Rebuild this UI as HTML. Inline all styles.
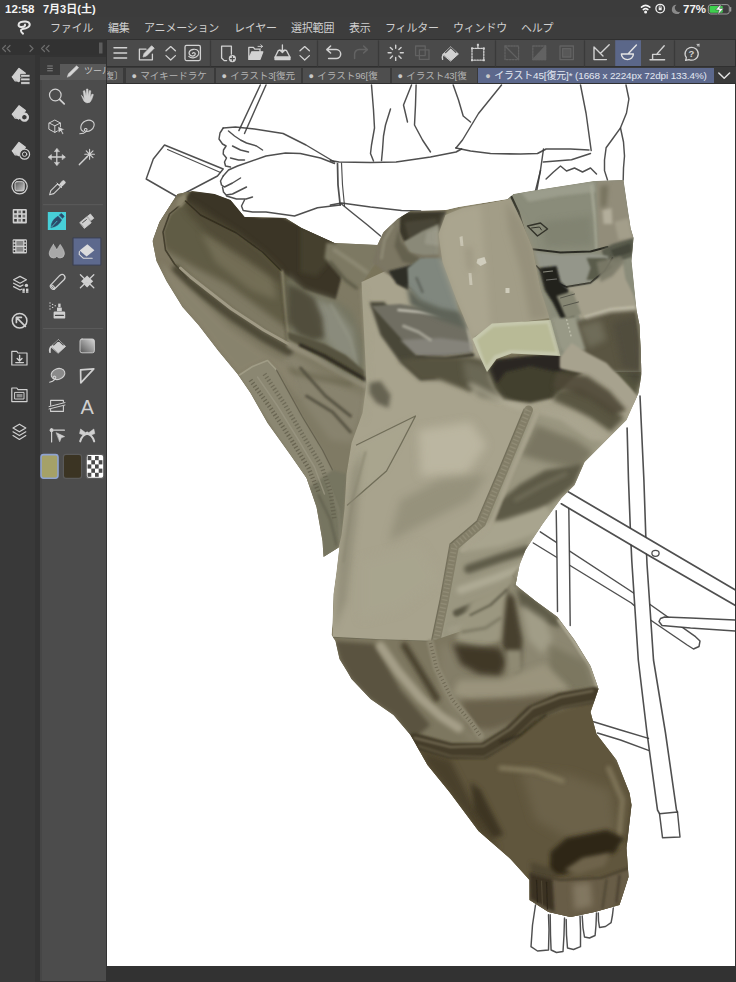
<!DOCTYPE html>
<html lang="ja"><head><meta charset="utf-8"><title>CLIP STUDIO PAINT</title>
<style>
html,body{margin:0;padding:0;}
body{width:736px;height:982px;position:relative;overflow:hidden;background:#333;font-family:"Liberation Sans","Noto Sans CJK JP",sans-serif;color:#d8d8d8;}
.abs{position:absolute;}
#status{left:0;top:0;width:736px;height:17px;background:#3c3c3c;}
#status span{position:absolute;top:2px;font-size:11.5px;line-height:14px;color:#f4f4f4;font-weight:bold;white-space:nowrap;}
#menu{left:0;top:17px;width:736px;height:22px;background:#3d3d3d;}
#menu span{position:absolute;top:4px;font-size:11px;line-height:14px;color:#d0d0d0;white-space:nowrap;letter-spacing:-0.2px;}
#leftstrip{left:0;top:39px;width:35px;height:943px;background:#393939;}
#leftgap{left:35px;top:39px;width:5px;height:943px;background:#343434;}
#lefttop{left:0;top:39px;width:106px;height:16px;background:#323232;}
#toolpanel{left:40px;top:57px;width:65.5px;height:924px;background:#4c4c4c;border-left:2px solid #464646;box-sizing:border-box;}
#tphead{left:40px;top:57px;width:65.5px;height:23px;background:#3a3a3a;}
#tpline{left:40px;top:75px;width:65.5px;height:5px;background:#565656;}
#tptab{left:60px;top:63.5px;width:45.500px;height:16px;background:#595959;overflow:hidden;}
#tptab span{position:absolute;left:24px;top:1px;font-size:9px;line-height:12px;color:#c8c8c8;white-space:nowrap;}
#tbdark{left:105.500px;top:39px;width:631px;height:46px;background:#303030;}
#toolbar{left:106.500px;top:40.200px;width:628.500px;height:26px;background:#4a4a4a;}
#tabs{left:106.500px;top:67.300px;width:629px;height:16.200px;background:#3a3a3a;}
#canvas{left:106.500px;top:84px;width:628.700px;height:881.600px;background:#fff;overflow:hidden;}
#bottom{left:105.500px;top:965.600px;width:631px;height:17px;background:#323232;}
.tab{position:absolute;top:67.800px;height:15.400px;font-size:9.6px;line-height:15.400px;color:#b4b4b4;white-space:nowrap;overflow:hidden;background:#4e4e4e;letter-spacing:-0.1px;}
.tab.sel{background:#5c688c;color:#e4e8f2;font-size:9.9px;}
.tab b{font-weight:normal;font-size:9px;vertical-align:0px;margin-right:3.5px;color:#c8c8c8;}
</style></head><body>
<div id="status" class="abs"><span style="left:5px">12:58</span><span style="left:43px;font-size:11px">7月3日(土)</span><span style="left:683px">77%</span></div>
<div id="menu" class="abs">
<span style="left:50px">ファイル</span><span style="left:108px">編集</span><span style="left:144px">アニメーション</span><span style="left:234px">レイヤー</span><span style="left:291px">選択範囲</span><span style="left:349px">表示</span><span style="left:385px">フィルター</span><span style="left:453px">ウィンドウ</span><span style="left:521px">ヘルプ</span>
</div>
<div id="leftstrip" class="abs"></div><div id="leftgap" class="abs"></div>
<div id="lefttop" class="abs"></div>
<div id="toolpanel" class="abs"></div><div id="tphead" class="abs"></div><div id="tpline" class="abs"></div>
<div id="tptab" class="abs"><span>ツール</span></div>
<div id="tbdark" class="abs"></div>
<div id="toolbar" class="abs"></div>
<div id="tabs" class="abs"></div>
<div class="tab" style="left:106.500px;width:16px;"><span style="margin-left:-2px">復〕</span></div>
<div class="tab" style="left:125.500px;width:88px;padding-left:6px;box-sizing:border-box"><b>●</b>マイキードラケ</div>
<div class="tab" style="left:215.500px;width:85px;padding-left:6px;box-sizing:border-box"><b>●</b>イラスト3[復元</div>
<div class="tab" style="left:302.500px;width:87px;padding-left:6px;box-sizing:border-box"><b>●</b>イラスト96[復</div>
<div class="tab" style="left:391.500px;width:85px;padding-left:6px;box-sizing:border-box"><b>●</b>イラスト43[復</div>
<div class="tab sel" style="left:478.300px;width:235.500px;padding-left:7px;box-sizing:border-box"><b>●</b>イラスト45[復元]* (1668 x 2224px 72dpi 133.4%)</div>
<div id="canvas" class="abs"><svg width="630" height="882" viewBox="106.500 84 630 882" style="position:absolute;left:0;top:0">
<defs>
<filter id="b3" filterUnits="userSpaceOnUse" x="100" y="80" width="640" height="890"><feGaussianBlur stdDeviation="3"/></filter>
<filter id="b1" filterUnits="userSpaceOnUse" x="100" y="80" width="640" height="890"><feGaussianBlur stdDeviation="1"/></filter>
<filter id="b2" filterUnits="userSpaceOnUse" x="100" y="80" width="640" height="890"><feGaussianBlur stdDeviation="2"/></filter>
<filter id="b1_5" filterUnits="userSpaceOnUse" x="100" y="80" width="640" height="890"><feGaussianBlur stdDeviation="1.5"/></filter>
<filter id="b2_5" filterUnits="userSpaceOnUse" x="100" y="80" width="640" height="890"><feGaussianBlur stdDeviation="2.5"/></filter>
<filter id="b1_2" filterUnits="userSpaceOnUse" x="100" y="80" width="640" height="890"><feGaussianBlur stdDeviation="1.2"/></filter>
<filter id="b0_6" filterUnits="userSpaceOnUse" x="100" y="80" width="640" height="890"><feGaussianBlur stdDeviation="0.6"/></filter>
<filter id="b0_7" filterUnits="userSpaceOnUse" x="100" y="80" width="640" height="890"><feGaussianBlur stdDeviation="0.7"/></filter>
<filter id="b0_8" filterUnits="userSpaceOnUse" x="100" y="80" width="640" height="890"><feGaussianBlur stdDeviation="0.8"/></filter>
<filter id="b4" filterUnits="userSpaceOnUse" x="100" y="80" width="640" height="890"><feGaussianBlur stdDeviation="4"/></filter>
<filter id="b1_8" filterUnits="userSpaceOnUse" x="100" y="80" width="640" height="890"><feGaussianBlur stdDeviation="1.8"/></filter>
<filter id="b0_5" filterUnits="userSpaceOnUse" x="100" y="80" width="640" height="890"><feGaussianBlur stdDeviation="0.5"/></filter>
<filter id="b5" filterUnits="userSpaceOnUse" x="100" y="80" width="640" height="890"><feGaussianBlur stdDeviation="5"/></filter>

<clipPath id="sil"><path d="M177,194 L192,191 L214,194 L230,200 L244,217 L285,218 L301,228 L334,243 L377,245 L383,232 L397,219 L410,211 L445,210 L458,207 L507,199 L513,194 L543,189 L575,184 L594,181 L623,180 L630,228 L633,238 L631,261 L636,310 L639,325 L641,374 L638,393 L626,420 L604,442 L584,462 L574,485 L561,498 L542,524 L525,550 L519,565 L515,585 L535,601 L557,617 L574,640 L590,666 L598,689 L590,712 L596,734 L616,760 L629,793 L631,805 L626,848 L628,877 L619,905 L594,912 L570,917 L548,912 L529,900 L529,880 L510,859 L478,831 L449,792 L427,765 L410,735 L393,715 L370,699 L351,679 L347,672 L339,659 L335,641 L331,635 L332,623 L333,594 L336,572 L339,547 L323,557 L322,541 L316,507 L306,478 L290,455 L267,423 L250,393 L237,374 L218,351 L198,325 L182,307 L166,281 L156,261 L152,241 L159,222 Z"/></clipPath>
</defs>
<g>
<path d="M259.8,85 L238.4,130.6" fill="none" stroke="#3c3c3c" stroke-width="1.45" stroke-linecap="round" stroke-linejoin="round" opacity="0.9"/>
<path d="M265.5,85 L244,133.5" fill="none" stroke="#3c3c3c" stroke-width="1.45" stroke-linecap="round" stroke-linejoin="round" opacity="0.9"/>
<path d="M164,145 L222.7,169 L217,176 L177,197 L145.7,179 L152.8,159 L164,145" fill="none" stroke="#3c3c3c" stroke-width="1.45" stroke-linecap="round" stroke-linejoin="round" opacity="0.9"/>
<path d="M167,149.5 L220,172.5" fill="none" stroke="#3c3c3c" stroke-width="1.16" stroke-linecap="round" stroke-linejoin="round" opacity="0.9"/>
<path d="M222.7,128 L219.5,133 L218.5,139 L222,144 L225.6,146 L223,150 L222.7,154 L226,158 L224,162 L225,166 L230,167" fill="none" stroke="#3c3c3c" stroke-width="1.45" stroke-linecap="round" stroke-linejoin="round" opacity="0.9"/>
<path d="M222.7,128 L235,127 L254,129 L282.6,133.5 L305.5,145 L334,162" fill="none" stroke="#3c3c3c" stroke-width="1.45" stroke-linecap="round" stroke-linejoin="round" opacity="0.9"/>
<path d="M228,131 L234,136 L240,140 L246,143 L256,146 L262,150" fill="none" stroke="#3c3c3c" stroke-width="1.45" stroke-linecap="round" stroke-linejoin="round" opacity="0.9"/>
<path d="M232,146 L240,150 L248,152" fill="none" stroke="#3c3c3c" stroke-width="1.45" stroke-linecap="round" stroke-linejoin="round" opacity="0.9"/>
<path d="M230,158 L238,160 L244,160" fill="none" stroke="#3c3c3c" stroke-width="1.45" stroke-linecap="round" stroke-linejoin="round" opacity="0.9"/>
<path d="M222.7,176 L228,170 L237,166 L265.5,156 L285,153 L299.8,153.5 L320,158 L334,163.5" fill="none" stroke="#3c3c3c" stroke-width="1.45" stroke-linecap="round" stroke-linejoin="round" opacity="0.9"/>
<path d="M222.7,176 L220,181 L221,185 L224,187 L232,183 L240,178" fill="none" stroke="#3c3c3c" stroke-width="1.45" stroke-linecap="round" stroke-linejoin="round" opacity="0.9"/>
<path d="M222,187 L223,192 L225.6,195 L232,194 L240,190 L246,187" fill="none" stroke="#3c3c3c" stroke-width="1.45" stroke-linecap="round" stroke-linejoin="round" opacity="0.9"/>
<path d="M226,196 L236,199 L245.6,199 L252,197" fill="none" stroke="#3c3c3c" stroke-width="1.45" stroke-linecap="round" stroke-linejoin="round" opacity="0.9"/>
<path d="M244,200 L241,206 L242.7,210.5 L252,212 L265.5,212 L294,216 L317,207.7 L339.7,205" fill="none" stroke="#3c3c3c" stroke-width="1.45" stroke-linecap="round" stroke-linejoin="round" opacity="0.9"/>
<path d="M337,163.5 L337.5,185 L339.7,205" fill="none" stroke="#3c3c3c" stroke-width="1.74" stroke-linecap="round" stroke-linejoin="round" opacity="0.9"/>
<path d="M341,163 L342,185 L344,206" fill="none" stroke="#3c3c3c" stroke-width="1.16" stroke-linecap="round" stroke-linejoin="round" opacity="0.9"/>
<path d="M330,160.6 L338.6,162 L370,162.5 L395.6,162 L430,157 L455.5,152 L461,149" fill="none" stroke="#3c3c3c" stroke-width="1.74" stroke-linecap="round" stroke-linejoin="round" opacity="0.9"/>
<path d="M330,205 L341,203 L370,207 L401,210.5 L420,211" fill="none" stroke="#3c3c3c" stroke-width="1.74" stroke-linecap="round" stroke-linejoin="round" opacity="0.9"/>
<path d="M341,204 L352,213 L367,225 L380,236" fill="none" stroke="#3c3c3c" stroke-width="1.45" stroke-linecap="round" stroke-linejoin="round" opacity="0.9"/>
<path d="M371,85 L373,110 L374,128 L371,145 L370,153.5 L373,161" fill="none" stroke="#3c3c3c" stroke-width="1.45" stroke-linecap="round" stroke-linejoin="round" opacity="0.9"/>
<path d="M390,109 L385,125 L383,136 L382,150 L381,160.6" fill="none" stroke="#3c3c3c" stroke-width="1.45" stroke-linecap="round" stroke-linejoin="round" opacity="0.9"/>
<path d="M415.6,85 L415,105 L414,125 L422,140 L430,152" fill="none" stroke="#3c3c3c" stroke-width="1.45" stroke-linecap="round" stroke-linejoin="round" opacity="0.9"/>
<path d="M411,85 L403,105 L407,122" fill="none" stroke="#3c3c3c" stroke-width="1.45" stroke-linecap="round" stroke-linejoin="round" opacity="0.9"/>
<path d="M501,85 L478,113.5 L462,140 L455.5,148" fill="none" stroke="#3c3c3c" stroke-width="1.45" stroke-linecap="round" stroke-linejoin="round" opacity="0.9"/>
<path d="M452.7,85 L458,100 L462.7,116 L470,122" fill="none" stroke="#3c3c3c" stroke-width="1.45" stroke-linecap="round" stroke-linejoin="round" opacity="0.9"/>
<path d="M455.5,148 L470,151 L490,153.5 L520,154 L537,153.5 L545.6,149 L570,149 L588.4,150" fill="none" stroke="#3c3c3c" stroke-width="1.74" stroke-linecap="round" stroke-linejoin="round" opacity="0.9"/>
<path d="M540,170.6 L535,190.6" fill="none" stroke="#3c3c3c" stroke-width="1.45" stroke-linecap="round" stroke-linejoin="round" opacity="0.9"/>
<path d="M542.8,162 L571,159.7 L590,153.5" fill="none" stroke="#3c3c3c" stroke-width="1.45" stroke-linecap="round" stroke-linejoin="round" opacity="0.9"/>
<path d="M543,149 L540,170 L536,192" fill="none" stroke="#3c3c3c" stroke-width="1.45" stroke-linecap="round" stroke-linejoin="round" opacity="0.9"/>
<path d="M580,85 L585.6,113.5 L590.7,150.6" fill="none" stroke="#3c3c3c" stroke-width="1.45" stroke-linecap="round" stroke-linejoin="round" opacity="0.9"/>
<path d="M625.5,85 L628.4,99 L626,113 L620,127.8 L612,139 L605.6,147.8 L604,160 L604,170.6 L607,180" fill="none" stroke="#3c3c3c" stroke-width="1.45" stroke-linecap="round" stroke-linejoin="round" opacity="0.9"/>
<path d="M620,128 L623,142 L624,156 L623,168 L622.7,180" fill="none" stroke="#3c3c3c" stroke-width="1.45" stroke-linecap="round" stroke-linejoin="round" opacity="0.9"/>
<path d="M545.6,179 L553,172 L560,166 L566,171 L574,168 L582,172 L590,168 L596,174" fill="none" stroke="#3c3c3c" stroke-width="1.45" stroke-linecap="round" stroke-linejoin="round" opacity="0.9"/>
<path d="M539.8,531.8 L629.4,590.5 L695,636.7 L700,640 L699,646 L693,649 L686.7,645 L630.8,603 L532.8,543 Z" fill="#fff" stroke="none"/>
<path d="M539.8,531.8 L629.4,590.5 L647.5,603 L695,636.7 L699.5,641 L698.5,646.5 L693,649 L686.7,645 L650,620 L630.8,603 L532.8,543" fill="none" stroke="#3c3c3c" stroke-width="1.45" stroke-linecap="round" stroke-linejoin="round" opacity="0.9"/>
<path d="M664,617 L736,620 L736,631 L661.5,625.5 L658,622 L660,618 Z" fill="#fff" stroke="none"/>
<path d="M736,620 L690,618 L664,617 L660,618.5 L658.5,621.5 L661.5,625.5 L690,628 L736,631" fill="none" stroke="#3c3c3c" stroke-width="1.45" stroke-linecap="round" stroke-linejoin="round" opacity="0.9"/>
<path d="M628,480 L643.4,480 L645.3,536 L646.5,564 L653,660 L665,733 L676,810 L677,812 L659,813.7 L657,810 L646.5,733 L637.8,660 L631.3,561 L630,533 Z" fill="#fff" stroke="none"/>
<path d="M626.6,428 L628,480 L630,533 L631.3,561 L637.8,660 L646.5,733 L657,810 L659,813.7" fill="none" stroke="#3c3c3c" stroke-width="1.595" stroke-linecap="round" stroke-linejoin="round" opacity="0.9"/>
<path d="M639.5,396 L643.4,480 L645.3,536 L646.5,564 L653,660 L665,733 L676,810 L677,812" fill="none" stroke="#3c3c3c" stroke-width="1.595" stroke-linecap="round" stroke-linejoin="round" opacity="0.9"/>
<path d="M555.7,510.8 L568.3,508 L569.7,625.5 L557,611.5 Z" fill="#fff" stroke="none"/>
<path d="M555.7,510.8 L556.5,560 L557,611.5" fill="none" stroke="#3c3c3c" stroke-width="1.45" stroke-linecap="round" stroke-linejoin="round" opacity="0.9"/>
<path d="M568.3,508 L569,560 L569.7,625.5" fill="none" stroke="#3c3c3c" stroke-width="1.45" stroke-linecap="round" stroke-linejoin="round" opacity="0.9"/>
<path d="M566.4,491 L736,590.6 L736,606 L560.8,503.8 Z" fill="#fff" stroke="none"/>
<path d="M566.4,491 L655,543 L736,590.6" fill="none" stroke="#3c3c3c" stroke-width="1.74" stroke-linecap="round" stroke-linejoin="round" opacity="0.9"/>
<path d="M560.8,503.8 L650,556.5 L736,606" fill="none" stroke="#3c3c3c" stroke-width="1.74" stroke-linecap="round" stroke-linejoin="round" opacity="0.9"/>
<ellipse cx="655" cy="553.300" rx="3.600" ry="3" fill="none" stroke="#3c3c3c" stroke-width="1.300" stroke-opacity="0.9"/>
<path d="M590.6,721 L620,730 L648,738.4" fill="none" stroke="#3c3c3c" stroke-width="1.45" stroke-linecap="round" stroke-linejoin="round" opacity="0.9"/>
<path d="M597,733 L620,740 L648,750.4" fill="none" stroke="#3c3c3c" stroke-width="1.45" stroke-linecap="round" stroke-linejoin="round" opacity="0.9"/>
<path d="M659,813.7 L662,837.7 L679.5,837 L677,812 L659,813.7" fill="none" stroke="#3c3c3c" stroke-width="1.45" stroke-linecap="round" stroke-linejoin="round" opacity="0.9"/>
<path d="M535,905 L532,925 L530.5,946.7 L537,951 L548,950 L548.5,930 L548,914.7" fill="none" stroke="#3c3c3c" stroke-width="1.45" stroke-linecap="round" stroke-linejoin="round" opacity="0.9"/>
<path d="M549.7,914.7 L550,935 L550.6,950 L556,952.5 L562.5,951.5 L563.5,935 L564,918" fill="none" stroke="#3c3c3c" stroke-width="1.45" stroke-linecap="round" stroke-linejoin="round" opacity="0.9"/>
<path d="M565.7,919.5 L566,935 L567,948 L573,949.5 L580,946.7 L580,930 L579.5,916" fill="none" stroke="#3c3c3c" stroke-width="1.45" stroke-linecap="round" stroke-linejoin="round" opacity="0.9"/>
<path d="M581.7,916 L582.5,928 L584,937 L589,938 L594.6,935.5 L595.5,925 L596,913" fill="none" stroke="#3c3c3c" stroke-width="1.45" stroke-linecap="round" stroke-linejoin="round" opacity="0.9"/>
<path d="M597.8,913 L598,921 L599,927.5 L605,926.5 L610.6,922.7 L612,915 L612.8,908" fill="none" stroke="#3c3c3c" stroke-width="1.45" stroke-linecap="round" stroke-linejoin="round" opacity="0.9"/>
</g>
<g clip-path="url(#sil)">
<path d="M177,194 L192,191 L214,194 L230,200 L244,217 L285,218 L301,228 L334,243 L377,245 L383,232 L397,219 L410,211 L445,210 L458,207 L507,199 L513,194 L543,189 L575,184 L594,181 L623,180 L630,228 L633,238 L631,261 L636,310 L639,325 L641,374 L638,393 L626,420 L604,442 L584,462 L574,485 L561,498 L542,524 L525,550 L519,565 L515,585 L535,601 L557,617 L574,640 L590,666 L598,689 L590,712 L596,734 L616,760 L629,793 L631,805 L626,848 L628,877 L619,905 L594,912 L570,917 L548,912 L529,900 L529,880 L510,859 L478,831 L449,792 L427,765 L410,735 L393,715 L370,699 L351,679 L347,672 L339,659 L335,641 L331,635 L332,623 L333,594 L336,572 L339,547 L323,557 L322,541 L316,507 L306,478 L290,455 L267,423 L250,393 L237,374 L218,351 L198,325 L182,307 L166,281 L156,261 L152,241 L159,222 Z" fill="#7a745a"/>
<path d="M150,185 L383,232 L384,250 L362,282 L366,383 L362,413 L351,443 L346,474 L344,509 L341,535 L338,548 L320,560 L140,330 Z" fill="#7f7a64"/>
<path d="M176,192 L246,215 L300,228 L300,300 L292,332 L262,310 L227,284 L194,267 L156,245 L156,225 Z" fill="#605b44" filter="url(#b3)"/>
<path d="M200,232 L240,250 L272,276 L276,300 L250,290 L215,262 Z" fill="#7c765d" filter="url(#b3)" opacity="0.7"/>
<path d="M185,200 L190,191 L214,192 L231,198 L240,207 L247,216 L262,218 L279,216 L300,226 L334,241 L345,262 L335,300 L303,290 L281,271 L262,252 L236,233 L222,226 L200,215 Z" fill="#3b3626" filter="url(#b1)"/>
<path d="M184,199 L198,207 L214,218 L236,232 L262,252 L281,271 L282,285 L258,268 L230,250 L205,232 L186,212 Z" fill="#4f4a35" filter="url(#b3)" opacity="0.85"/>
<path d="M300,226 L334,241 L328,262 L316,276 L300,272 Z" fill="#45412f" filter="url(#b2)"/>
<path d="M326,243 L377,245 L384,250 L372,266 L361,283 L350,288 L335,270 L324,258 Z" fill="#7d7963" filter="url(#b1_5)"/>
<path d="M334,250 L352,262 L366,272" fill="none" stroke="#918d77" stroke-width="4" stroke-linecap="round" stroke-linejoin="round" filter="url(#b1_5)" opacity="0.8"/>
<path d="M330,262 L345,280 L356,288" fill="none" stroke="#55523f" stroke-width="3" stroke-linecap="round" stroke-linejoin="round" filter="url(#b1_5)" opacity="0.8"/>
<path d="M177,196 L164,211 L156,226 L151.5,242 L155,258 L161,271 L170,286 L182,301 L192,286 L176,266 L166,250 L163.5,232 L170,215 L185,201 Z" fill="#7f7862" filter="url(#b1)"/>
<path d="M286,350 L318,372 L345,388 L364,396 L362,413 L351,443 L330,440 L300,400 L280,370 Z" fill="#88836e" filter="url(#b3)"/>
<path d="M286,370 L320,378 L350,384" fill="none" stroke="#6b6650" stroke-width="6" stroke-linecap="round" stroke-linejoin="round" filter="url(#b2_5)" opacity="0.7"/>
<path d="M300,368 L325,396 L350,416" fill="none" stroke="#4d4a3a" stroke-width="3" stroke-linecap="round" stroke-linejoin="round" filter="url(#b1_2)" opacity="0.8"/>
<path d="M306,396 L332,412 L350,432" fill="none" stroke="#4d4a3a" stroke-width="3" stroke-linecap="round" stroke-linejoin="round" filter="url(#b1_2)" opacity="0.8"/>
<path d="M184.5,201 L169,214 L162.5,232 L165,250 L174,264 L186,278" fill="none" stroke="#3f3a2a" stroke-width="1.6" stroke-linecap="round" stroke-linejoin="round" filter="url(#b0_6)" opacity="0.9"/>
<path d="M178,197 L185,193.5 L186,200 L181,207 L176,206 Z" fill="#8a846c" filter="url(#b1)"/>
<path d="M185,201 L200,215 L222,226 L236,233 L262,252 L281,271" fill="none" stroke="#2f2a1c" stroke-width="1.5" stroke-linecap="round" stroke-linejoin="round" filter="url(#b0_6)" opacity="0.8"/>
<path d="M176,270 L188,282 L204,295 L233,317 L263,337 L288,351" fill="none" stroke="#4c4735" stroke-width="9.5" stroke-linecap="round" stroke-linejoin="round" filter="url(#b2)" opacity="0.95"/>
<path d="M180,268 L190,277 L231,309 L263,330 L290,345" fill="none" stroke="#a09a85" stroke-width="3" stroke-linecap="round" stroke-linejoin="round" filter="url(#b0_7)"/>
<path d="M290,345 L311,355 L340,371 L365,385" fill="none" stroke="#938d78" stroke-width="7" stroke-linecap="round" stroke-linejoin="round" filter="url(#b1_5)"/>
<path d="M281.5,271 L284,300 L288,340" fill="none" stroke="#938d73" stroke-width="2.2" stroke-linecap="round" stroke-linejoin="round" filter="url(#b0_8)"/>
<path d="M279.5,273 L282,302 L286,340" fill="none" stroke="#4f4a37" stroke-width="1.2" stroke-linecap="round" stroke-linejoin="round" filter="url(#b0_8)" opacity="0.8"/>
<path d="M286,274 L303,290 L335,300 L352,312 L362,340 L366,383 L340,372 L310,350 L290,338 Z" fill="#767662" filter="url(#b3)"/>
<path d="M306,296 L334,306 L352,330 L358,365 L334,352 L316,328 Z" fill="#8a8b7b" filter="url(#b3)"/>
<path d="M287,284 L300,289 L314,298 L322,318 L324,338 L312,340 L298,334 L288,322 Z" fill="#4d4938" filter="url(#b2_5)" opacity="0.9"/>
<path d="M330,304 L350,340 L358,372" fill="none" stroke="#9a9b8c" stroke-width="2" stroke-linecap="round" stroke-linejoin="round" filter="url(#b1_5)" opacity="0.6"/>
<path d="M287,332 L304,337 L324,344 L345,355 L364,371 L366,382 L345,371 L324,359 L304,348 L288,339 Z" fill="#57533f" filter="url(#b1)"/>
<path d="M300,345 L324,356 L345,368 L364,379" fill="none" stroke="#2f2c20" stroke-width="3.5" stroke-linecap="round" stroke-linejoin="round" filter="url(#b0_8)"/>
<path d="M160,262 L190,290 L228,328 L262,352 L286,364 L300,400 L276,370 L267,360 L238,375 L218,351 L198,325 L182,307 L166,281 Z" fill="#8a846e" filter="url(#b2_5)" opacity="0.95"/>
<path d="M238.5,375 L252,366 L267,360 L276,369 L302,417 L322,450 L332,470 L318,500 L309,487 L296,465 L272,428 L254,400 Z" fill="#8b8772" filter="url(#b1)"/>
<path d="M239,375 L252,366.5 L267,360.5 L276,370" fill="none" stroke="#a09c86" stroke-width="1.6" stroke-linecap="round" stroke-linejoin="round" filter="url(#b0_6)"/>
<path d="M276,370 L302,417 L322,450 L332,470" fill="none" stroke="#5e5a48" stroke-width="1.2" stroke-linecap="round" stroke-linejoin="round" filter="url(#b0_6)" opacity="0.8"/>
<path d="M309,487 L332,470 L346,474 L344,509 L341,535 L338,548 L323.5,557 L321,530 L316,508 Z" fill="#767460" filter="url(#b1_5)"/>
<path d="M318,495 L330,520 L336,545" fill="none" stroke="#5c5a49" stroke-width="2" stroke-linecap="round" stroke-linejoin="round" filter="url(#b1)" opacity="0.7"/>
<path d="M326,480 L338,510 L340,540" fill="none" stroke="#8a8873" stroke-width="2" stroke-linecap="round" stroke-linejoin="round" filter="url(#b1)" opacity="0.7"/>
<path d="M250,380 L270,408 L291,440 L308,468 L318,492" fill="none" stroke="#54503e" stroke-width="4.5" stroke-linecap="butt" stroke-linejoin="round" filter="url(#b0_6)" opacity="0.6" stroke-dasharray="1.3 2.2"/>
<path d="M264,374 L284,404 L304,438 L321,466 L330,492 L334,520" fill="none" stroke="#5a5644" stroke-width="4.5" stroke-linecap="butt" stroke-linejoin="round" filter="url(#b0_6)" opacity="0.55" stroke-dasharray="1.3 2.2"/>
<path d="M257,377 L277,406 L298,440 L314,467 L324,494" fill="none" stroke="#9a9682" stroke-width="1.5" stroke-linecap="round" stroke-linejoin="round" filter="url(#b0_6)" opacity="0.8"/>
<path d="M361,282 L385,271 L412,290 L440,306 L472,332 L488,371 L560,356 L600,330 L650,320 L650,400 L600,450 L575,490 L545,525 L522,565 L517,590 L545,610 L560,625 L430,642 L332,638 L333,594 L336,572 L338,548 L341,535 L344,509 L346,474 L351,443 L362,413 L366,383 Z" fill="#a8a38d"/>
<path d="M364,290 L367,340 L368,390 L364,420" fill="none" stroke="#a6a28b" stroke-width="5" stroke-linecap="round" stroke-linejoin="round" filter="url(#b2)" opacity="0.8"/>
<path d="M369,302 L384,302 L402,330 L428,360 L436,378 L420,380 L398,360 L380,335 Z" fill="#4a4739" filter="url(#b1_5)"/>
<path d="M371,306 L400,304 L440,311 L464,316 L472,352 L440,356 L417,356 L400,338 Z" fill="#706e62" filter="url(#b0_8)"/>
<path d="M400,340 L440,338 L470,342 L472,352 L440,356 L417,356 Z" fill="#85837a" filter="url(#b1_5)"/>
<path d="M398,310 L420,312 L456,318" fill="none" stroke="#c0beb0" stroke-width="2.5" stroke-linecap="round" stroke-linejoin="round" filter="url(#b0_8)"/>
<path d="M403,326 L418,332 L430,340" fill="none" stroke="#a9a79a" stroke-width="3" stroke-linecap="round" stroke-linejoin="round" filter="url(#b1_2)" opacity="0.9"/>
<path d="M465,320 L469,338 L471,350" fill="none" stroke="#a5a396" stroke-width="2" stroke-linecap="round" stroke-linejoin="round" filter="url(#b0_8)"/>
<path d="M417,358 L445,359 L472,355" fill="none" stroke="#3f3c31" stroke-width="4" stroke-linecap="round" stroke-linejoin="round" filter="url(#b1)"/>
<path d="M398,360 L420,357 L470,357 L482,360 L488,372 L470,392 L440,380 L420,380 Z" fill="#57533f" filter="url(#b2)"/>
<path d="M487,371 L495,360 L560,353 L590,368 L570,380 L553,398 L530,403 L503,400 L494,388 Z" fill="#423f2e" filter="url(#b1_5)"/>
<path d="M489,370 L496,360 L560,353 L584,366 L556,372 L530,366 L505,372 L496,384 Z" fill="#2a2820" filter="url(#b1_5)"/>
<path d="M462,360 L486,366 L494,388 L503,400 L480,396 L465,380 Z" fill="#6a6754" filter="url(#b3)"/>
<path d="M562,352 L600,350 L641,345 L641,380 L636,398 L620,385 L596,366 Z" fill="#57543f" filter="url(#b2_5)"/>
<path d="M612,340 L641,335 L641,385 L630,380 Z" fill="#4a4738" filter="url(#b3)" opacity="0.8"/>
<path d="M560,357 L571,343 L587,353 L606,363 L630,389 L639,400 L627,409 L609,389 L587,374 L560,368 Z" fill="#a7a28e" filter="url(#b1_5)"/>
<path d="M556,390 L580,388 L604,402 L624,418 L610,432 L590,418 L570,408 L552,400 Z" fill="#5a5743" filter="url(#b2_5)"/>
<path d="M540,412 L575,415 L606,436 L590,452 L560,440 L535,430 Z" fill="#aaa691" filter="url(#b4)" opacity="0.8"/>
<path d="M530,412 L560,420 L590,440 L604,442 L584,462 L574,485 L561,498 L542,524 L525,550 L519,565 L517,590 L500,600 L470,628 L440,642 L445,600 L455,548 L482,524 L505,468 Z" fill="#9a9680" filter="url(#b2)"/>
<path d="M536,425 L575,440 L592,452 L580,470 L545,462 L520,455 Z" fill="#77735e" filter="url(#b3)" opacity="0.9"/>
<path d="M492,521 L500,500 L520,484 L545,470 L582,464 L574,484 L558,497 L535,513 L510,525 Z" fill="#5d5a47" filter="url(#b2)"/>
<path d="M515,500 L540,486 L565,474" fill="none" stroke="#77735e" stroke-width="4" stroke-linecap="round" stroke-linejoin="round" filter="url(#b2)" opacity="0.8"/>
<path d="M464,528 L500,521 L546,506 L552,515 L540,532 L500,546 L462,552 Z" fill="#a8a48e" filter="url(#b2)"/>
<path d="M468,569 L500,558 L526,550" fill="none" stroke="#5f5c49" stroke-width="9" stroke-linecap="round" stroke-linejoin="round" filter="url(#b2)"/>
<path d="M460,590 L495,578 L519,569" fill="none" stroke="#aeaa94" stroke-width="8" stroke-linecap="round" stroke-linejoin="round" filter="url(#b2)"/>
<path d="M456,613 L490,599 L513,587" fill="none" stroke="#5a5744" stroke-width="7" stroke-linecap="round" stroke-linejoin="round" filter="url(#b1_8)"/>
<path d="M450,630 L480,622 L505,606" fill="none" stroke="#a29e88" stroke-width="6" stroke-linecap="round" stroke-linejoin="round" filter="url(#b2)" opacity="0.9"/>
<path d="M536,414 L512,470 L489,527 L462,550" fill="none" stroke="#a8a38d" stroke-width="5" stroke-linecap="round" stroke-linejoin="round" filter="url(#b1_2)" opacity="0.9"/>
<path d="M528,410 L504,468 L481,523 L454,546 L444,600 L435,643" fill="none" stroke="#837e68" stroke-width="9" stroke-linecap="round" stroke-linejoin="round" filter="url(#b0_7)"/>
<path d="M528,410 L504,468 L481,523 L454,546 L444,600 L435,643" fill="none" stroke="#a09b85" stroke-width="6" stroke-linecap="butt" stroke-linejoin="round" filter="url(#b0_5)" opacity="0.45" stroke-dasharray="1.5 2.5"/>
<path d="M523.5,409 L499.5,467 L476.5,521 L449.5,544 L439.5,600 L430.5,643" fill="none" stroke="#6a6652" stroke-width="1.2" stroke-linecap="round" stroke-linejoin="round" filter="url(#b0_5)" opacity="0.8"/>
<path d="M369,383 L380,381 L390,395 L388,408 L376,403 L369,393 Z" fill="#5f5c4b" filter="url(#b2)" opacity="0.9"/>
<path d="M356,445 L415,416 L386,471 L347,505 Z" fill="#a9a58f" filter="url(#b2)" opacity="0.8"/>
<path d="M356,445 L415,416 L400,445 L386,471 L347,505" fill="none" stroke="#6a6753" stroke-width="1.3" stroke-linecap="round" stroke-linejoin="round" filter="url(#b0_6)" opacity="0.9"/>
<path d="M365,452 L352,500 L343,562" fill="none" stroke="#7d7964" stroke-width="1.5" stroke-linecap="round" stroke-linejoin="round" filter="url(#b1)" opacity="0.7"/>
<path d="M338,560 L352,470 L362,450 L356,520 L346,600 L334,630 Z" fill="#8d8974" filter="url(#b3)" opacity="0.7"/>
<path d="M418,430 L470,422 L486,445 L466,474 L420,476 Z" fill="#bdb8a3" filter="url(#b5)" opacity="0.9"/>
<path d="M400,500 L440,480 L487,474 L470,500 L420,525 L388,542 Z" fill="#8f8b76" filter="url(#b4)" opacity="0.7"/>
<path d="M360,560 L420,545 L440,580 L400,610 L360,620 Z" fill="#a9a58f" filter="url(#b5)" opacity="0.7"/>
<path d="M470,385 L500,400 L522,408" fill="none" stroke="#b6b29d" stroke-width="5" stroke-linecap="round" stroke-linejoin="round" filter="url(#b2_5)" opacity="0.7"/>
<path d="M332,637.5 L380,640 L430,641.5" fill="none" stroke="#6e6b57" stroke-width="1.5" stroke-linecap="round" stroke-linejoin="round" filter="url(#b0_6)"/>
<path d="M331,638 L430,641.5 L470,628 L500,600 L517,590 L512,575 L530,590 L560,612 L610,690 L640,800 L640,920 L520,920 L330,680 Z" fill="#7d7760"/>
<path d="M512,575 L520,565 L514,585 L530,595 L554,612 L568,631 L581,650 L595,674 L600,690 L590,710 L560,705 L520,715 L495,700 L500,640 L505,600 Z" fill="#8c8771" filter="url(#b1_5)"/>
<path d="M516,588 L532,597 L556,617 L560,628 L540,622 L520,606 Z" fill="#5d5a46" filter="url(#b2)"/>
<path d="M503,588 L514,598 L522,640 L520,672 L508,676 L501,640 Z" fill="#46412f" filter="url(#b2_5)"/>
<path d="M520,604 L545,620 L552,640 L542,654 L528,640 Z" fill="#a19d87" filter="url(#b3)"/>
<path d="M558,620 L573,641 L590,668 L597,689" fill="none" stroke="#b5b19c" stroke-width="2.5" stroke-linecap="round" stroke-linejoin="round" filter="url(#b1)" opacity="0.95"/>
<path d="M550,645 L585,662 L594,690 L570,692 L548,672 Z" fill="#7c7761" filter="url(#b3)"/>
<path d="M470,600 L500,585 L512,575 L505,600 L500,640 L480,650 L455,640 Z" fill="#9b9780" filter="url(#b2_5)"/>
<path d="M470,615 L490,605 L506,590" fill="none" stroke="#5c5946" stroke-width="2.5" stroke-linecap="round" stroke-linejoin="round" filter="url(#b1_2)" opacity="0.8"/>
<path d="M462,632 L485,628 L500,618" fill="none" stroke="#6a6753" stroke-width="2.5" stroke-linecap="round" stroke-linejoin="round" filter="url(#b1_5)" opacity="0.7"/>
<path d="M440,645 L500,650 L520,680 L560,690 L592,694 L590,706 L540,712 L500,730 L470,742 L452,720 L438,690 Z" fill="#847e67" filter="url(#b3)"/>
<path d="M452,644 L500,648 L506,662 L500,676 L478,674 L460,664 Z" fill="#3f3828" filter="url(#b3)"/>
<path d="M505,650 L521,650 L522,672 L508,676 Z" fill="#8f8a73" filter="url(#b2)"/>
<path d="M458,680 L500,680 L522,672 L545,664 L570,690 L540,694 L500,700 L470,702 L452,694 Z" fill="#9b957e" filter="url(#b3)" opacity="0.95"/>
<path d="M460,700 L520,698 L580,692 L590,704 L540,714 L490,730 L470,728 Z" fill="#685e48" filter="url(#b3)" opacity="0.95"/>
<path d="M334,641 L374,644 L400,690 L430,725 L412,740 L393,715 L370,699 L351,679 L340,660 Z" fill="#5a5340" filter="url(#b2)"/>
<path d="M380,646 L398,672 L420,698 L440,716 L458,728" fill="none" stroke="#a59f88" stroke-width="9" stroke-linecap="round" stroke-linejoin="round" filter="url(#b2)"/>
<path d="M404,646 L420,672 L436,698" fill="none" stroke="#443d2c" stroke-width="7" stroke-linecap="round" stroke-linejoin="round" filter="url(#b2)" opacity="0.9"/>
<path d="M430,643 L436,668 L452,700 L470,722 L480,736" fill="none" stroke="#8e8872" stroke-width="7" stroke-linecap="round" stroke-linejoin="round" filter="url(#b1)"/>
<path d="M430,643 L436,668 L452,700 L470,722 L480,736" fill="none" stroke="#5d5743" stroke-width="3.5" stroke-linecap="butt" stroke-linejoin="round" filter="url(#b0_5)" opacity="0.6" stroke-dasharray="1 2.5"/>
<path d="M412,745 L483,756 L532,720 L592,700 L616,760 L640,800 L640,920 L520,920 L440,790 Z" fill="#61573d" filter="url(#b1_5)"/>
<path d="M418,750 L450,760 L470,800 L500,850 L478,831 L449,792 L427,765 Z" fill="#4a412c" filter="url(#b3)"/>
<path d="M470,782 L480,790 L503,835 L492,838 L474,812 Z" fill="#3e3624" filter="url(#b2_5)"/>
<path d="M520,770 L570,775 L610,790 L615,830 L570,840 L535,820 Z" fill="#6c6248" filter="url(#b5)"/>
<path d="M500,768 L535,771 L562,781" fill="none" stroke="#8a8164" stroke-width="4.5" stroke-linecap="round" stroke-linejoin="round" filter="url(#b2)" opacity="0.9"/>
<path d="M608,768 L622,800 L618,845" fill="none" stroke="#8a8064" stroke-width="4.5" stroke-linecap="round" stroke-linejoin="round" filter="url(#b2)" opacity="0.85"/>
<path d="M626,775 L633,800 L628,840 L630,872" fill="none" stroke="#463d2a" stroke-width="3" stroke-linecap="round" stroke-linejoin="round" filter="url(#b1_2)" opacity="0.9"/>
<path d="M549,876 L550,852 L566,838 L606,830 L624,838 L614,853 L584,860 L566,874 Z" fill="#2f2819" filter="url(#b2)"/>
<path d="M564,870 L582,858 L610,853 L604,866 L578,874 Z" fill="#6e644c" filter="url(#b2)"/>
<path d="M530,862 L550,868 L560,878 L531,880 Z" fill="#4f4630" filter="url(#b2)"/>
<path d="M414,741 L450,751 L483,751 L510,734 L532,713 L560,701 L594,695" fill="none" stroke="#453e2c" stroke-width="16" stroke-linecap="round" stroke-linejoin="round" filter="url(#b0_8)"/>
<path d="M414,738 L450,747 L483,746 L510,729 L532,708 L560,697 L592,691" fill="none" stroke="#746c55" stroke-width="2" stroke-linecap="round" stroke-linejoin="round" filter="url(#b0_8)"/>
<path d="M418,746 L450,756 L483,757 L512,740 L534,719 L562,707 L594,701" fill="none" stroke="#645b45" stroke-width="2" stroke-linecap="round" stroke-linejoin="round" filter="url(#b0_8)" opacity="0.8"/>
<path d="M500,742 L520,735 L545,715" fill="none" stroke="#2f2a1d" stroke-width="2" stroke-linecap="round" stroke-linejoin="round" filter="url(#b1)" opacity="0.7"/>
<path d="M529,873 L560,879 L600,877 L630,867 L625,898 L603,912 L570,918.5 L548,913 L530,899 Z" fill="#685d46" filter="url(#b0_8)"/>
<path d="M529,873 L552,879 L554,912 L530,899 Z" fill="#3a3324" filter="url(#b1_5)"/>
<path d="M572,884 L590,882 L592,906 L574,910 Z" fill="#877d66" filter="url(#b3)" opacity="0.85"/>
<path d="M536,880 L537,902" fill="none" stroke="#2a2418" stroke-width="1.2" stroke-linecap="round" stroke-linejoin="round" filter="url(#b0_5)" opacity="0.8"/>
<path d="M541,881 L542,906" fill="none" stroke="#554c38" stroke-width="1.2" stroke-linecap="round" stroke-linejoin="round" filter="url(#b0_5)" opacity="0.8"/>
<path d="M546,882 L547,909" fill="none" stroke="#2a2418" stroke-width="1.2" stroke-linecap="round" stroke-linejoin="round" filter="url(#b0_5)" opacity="0.8"/>
<path d="M606,880 L602,908" fill="none" stroke="#4a4030" stroke-width="2" stroke-linecap="round" stroke-linejoin="round" filter="url(#b1)" opacity="0.8"/>
<path d="M619,876 L616,902" fill="none" stroke="#4a4030" stroke-width="2.5" stroke-linecap="round" stroke-linejoin="round" filter="url(#b1)" opacity="0.9"/>
<path d="M530,874 L560,880 L600,878 L629,868" fill="none" stroke="#3f3727" stroke-width="2" stroke-linecap="round" stroke-linejoin="round" filter="url(#b1)" opacity="0.8"/>
<path d="M377,245 L383,232 L397,216 L410,211 L446,211 L440,234 L444,262 L430,268 L410,262 L396,280 L384,272 L372,262 Z" fill="#7a7562" filter="url(#b1)"/>
<path d="M400,212.5 L446,211.5 L441,226 L438,236 L420,240 L404,242 L399,232 Z" fill="#3b3729" filter="url(#b1)"/>
<path d="M404,222 L436,218 L438,240 L410,246 Z" fill="#4d4a3a" filter="url(#b1_5)" opacity="0.8"/>
<path d="M438,224 L422,231 L403,242 L409,253 L424,255 L438,254.5 Z" fill="#8a8978" filter="url(#b0_8)"/>
<path d="M438,227 L426,232 L424,244 L438,246 Z" fill="#9c9b8b" filter="url(#b1_5)" opacity="0.8"/>
<path d="M397,216 L388,230 L378,245 L378,265 L388,273 L415,265 L421,259 L408,252 L400,241 L398,228 Z" fill="#7c7763" filter="url(#b0_8)"/>
<path d="M398,228 L400,241 L408,252 L421,259 L415,265 L402,262 L394,246 Z" fill="#5f5b49" filter="url(#b1_5)" opacity="0.8"/>
<path d="M392,226 L384,240 L381,258" fill="none" stroke="#918d78" stroke-width="3" stroke-linecap="round" stroke-linejoin="round" filter="url(#b1_2)" opacity="0.8"/>
<path d="M388,271 L415,264 L424,258 L412,272 L408,290 L396,284 Z" fill="#2f2d26" filter="url(#b1)"/>
<path d="M407,268 L420,258 L440,258 L452,264 L457,304 L460,316 L440,312 L420,303 L408,287 Z" fill="#80877e" filter="url(#b0_8)"/>
<path d="M406,285 L420,300 L440,308 L460,312 L470,330 L440,320 L410,305 Z" fill="#5f6458" filter="url(#b2)"/>
<path d="M416,278 L422,292" fill="none" stroke="#5a5f57" stroke-width="2.5" stroke-linecap="round" stroke-linejoin="round" filter="url(#b0_8)" opacity="0.8"/>
<path d="M440,258 L454,270 L458,300" fill="none" stroke="#6a7068" stroke-width="2" stroke-linecap="round" stroke-linejoin="round" filter="url(#b1)" opacity="0.7"/>
<path d="M507,199 L513,194 L543,189 L575,184 L594,181 L623,180 L628,214 L634,238 L632,262 L636,310 L641,340 L641,372 L600,372 L560,356 L548,318 L540,289 L532,248 L521,221 Z" fill="#8a8c7a"/>
<path d="M520,192 L594,181 L596,192 L560,196 L528,202 Z" fill="#9d9f8e" filter="url(#b1_5)" opacity="0.9"/>
<path d="M591,186 L594,215 L596,248" fill="none" stroke="#a6a795" stroke-width="3" stroke-linecap="round" stroke-linejoin="round" filter="url(#b1)" opacity="0.9"/>
<path d="M540,222 L590,216 L592,246 L545,247 Z" fill="#7f816f" filter="url(#b3)" opacity="0.8"/>
<path d="M511,197 L518,212 L524,232 L530,249" fill="none" stroke="#35352c" stroke-width="2.2" stroke-linecap="round" stroke-linejoin="round" filter="url(#b0_7)"/>
<path d="M596,181 L623,180 L628,214 L634,238 L620,252 L598,252 L597,220 Z" fill="#928d7a" filter="url(#b1)"/>
<path d="M602,210 L611,208 L612,224 L603,224 Z" fill="#b3ae9b" filter="url(#b1_5)"/>
<path d="M614,222 L628,218 L632,238 L618,240 Z" fill="#a39e8a" filter="url(#b1_5)"/>
<path d="M600,186 L608,185 L606,206 L600,208 Z" fill="#77735f" filter="url(#b2)"/>
<path d="M530,249 L560,252.5 L590,251.5 L607,247" fill="none" stroke="#2b2b24" stroke-width="2.2" stroke-linecap="round" stroke-linejoin="round" filter="url(#b0_6)"/>
<path d="M601,250 L612,244 L633,238 L634,247 L631,257 L616,262 L604,260 Z" fill="#5a5c4e" filter="url(#b0_8)"/>
<path d="M610,250 L630,243 L631,252 L614,258 Z" fill="#45473b" filter="url(#b1_2)"/>
<path d="M534,252 L560,255 L592,254 L608,256 L604,270 L590,282 L566,286 L548,278 L538,266 Z" fill="#94968a" filter="url(#b0_8)"/>
<path d="M586,258 L606,258 L612,268 L598,280 L586,280 L590,268 Z" fill="#5a5c4c" filter="url(#b1_2)"/>
<path d="M536,266 L548,279 L566,287 L590,283 L604,271 L612,258" fill="none" stroke="#2d2d26" stroke-width="1.8" stroke-linecap="round" stroke-linejoin="round" filter="url(#b0_6)"/>
<path d="M566,288 L590,284 L606,272 L622,261 L625,279 L633,295 L638,312 L600,316 L580,320 Z" fill="#a5a08c" filter="url(#b1_2)"/>
<path d="M596,262 L620,256 L624,262 L612,276 L600,282 Z" fill="#7c7a69" filter="url(#b1_5)" opacity="0.9"/>
<path d="M583,316 L610,308 L634,306 L637,314 L610,316 L588,324 Z" fill="#c5c1ad" filter="url(#b1)"/>
<path d="M575,322 L610,312 L637,310 L641,340 L641,372 L600,372 L575,350 Z" fill="#5a5443" filter="url(#b2)"/>
<path d="M612,322 L638,316 L641,372 L622,368 Z" fill="#4f4c3c" filter="url(#b3)" opacity="0.8"/>
<path d="M578,326 L600,320 L606,340 L588,348 Z" fill="#75725e" filter="url(#b3)" opacity="0.8"/>
<path d="M636,312 L640,340 L640,370" fill="none" stroke="#8a866f" stroke-width="2" stroke-linecap="round" stroke-linejoin="round" filter="url(#b1)" opacity="0.8"/>
<path d="M551,318 L574,316 L582,340 L585,350 L566,354 L560,348 Z" fill="#989986" filter="url(#b1_5)"/>
<path d="M566,319 L571,338" fill="none" stroke="#c4c4b2" stroke-width="1.5" stroke-linecap="butt" stroke-linejoin="round" filter="url(#b0_6)" opacity="0.8" stroke-dasharray="2 2"/>
<path d="M538,268 L556,266 L560,282 L568,290 L568,304 L574,316 L560,318 L552,302 L544,290 Z" fill="#22221c" filter="url(#b0_8)"/>
<path d="M556,296 L572,291 L581,314 L566,319 Z" fill="#868673" filter="url(#b0_8)"/>
<path d="M560,298 L574,294" fill="none" stroke="#55554a" stroke-width="1" stroke-linecap="round" stroke-linejoin="round" filter="url(#b0_5)"/>
<path d="M563,306 L578,302" fill="none" stroke="#55554a" stroke-width="1" stroke-linecap="round" stroke-linejoin="round" filter="url(#b0_5)"/>
<path d="M543,272 L552,271" fill="none" stroke="#8c8c80" stroke-width="1.2" stroke-linecap="round" stroke-linejoin="round" filter="url(#b0_5)"/>
<path d="M546,280 L556,279" fill="none" stroke="#70706a" stroke-width="1.2" stroke-linecap="round" stroke-linejoin="round" filter="url(#b0_5)"/>
<path d="M527,226 L540,223 L547,229 L537,236 L527,226" fill="none" stroke="#33332a" stroke-width="1.5" stroke-linecap="round" stroke-linejoin="round" filter="url(#b0_5)"/>
<path d="M531,228 L539,227 L541,230" fill="none" stroke="#33332a" stroke-width="1" stroke-linecap="round" stroke-linejoin="round" filter="url(#b0_5)"/>
<path d="M445,215 L462,208 L510,199 L521,221 L532,248 L540,289 L549,318 L488,327 L472,338 L456,300 L442,262 L438,234 Z" fill="#a29d87"/>
<path d="M445,215 L462,208 L480,205 L490,330 L472,338 L456,300 L442,262 L438,234 Z" fill="#aaa58f" filter="url(#b3)"/>
<path d="M505,200 L521,221 L532,248 L540,289 L549,318 L530,320 L520,270 L508,230 Z" fill="#96917b" filter="url(#b3)"/>
<path d="M477,259 L484,257 L486,263 L480,266 L476,263 Z" fill="#d0cdbd" filter="url(#b0_7)"/>
<path d="M459,237 L462,236 L463,246 L460,246 Z" fill="#c8c4b2" filter="url(#b0_7)"/>
<path d="M468,273 L471,273 L472,285 L469,285 Z" fill="#c8c4b2" filter="url(#b0_7)"/>
<path d="M505,288 L509,288 L509,293 L505,293 Z" fill="#cfccbb" filter="url(#b0_7)"/>
<path d="M468,250 L470,268" fill="none" stroke="#958f7a" stroke-width="6" stroke-linecap="round" stroke-linejoin="round" filter="url(#b3)" opacity="0.6"/>
<path d="M472,339 L491.5,323.5 L550,320 L560,356 L511,353.5 L496,359 L486.5,372 L480,358 Z" fill="#c6c8ad" filter="url(#b0_7)"/>
<path d="M476.5,340 L493,327 L547,323.5 L555.5,352 L510,350 L494,355.5 L486,366 L482,356 Z" fill="#b8ba96" filter="url(#b1)"/>
<path d="M550,320 L560,356" fill="none" stroke="#9a9b84" stroke-width="1.5" stroke-linecap="round" stroke-linejoin="round" filter="url(#b0_8)" opacity="0.8"/>
<path d="M560,357 L571,343 L587,353 L606,363 L630,389 L639,400 L627,409 L609,389 L587,374 L560,368 Z" fill="#a7a28e" filter="url(#b1_2)"/>
<path d="M556,372 L587,376 L609,391 L626,410 L612,416 L590,400 L570,392 L552,388 Z" fill="#4f4a39" filter="url(#b2)" opacity="0.9"/>
</g>
</svg></div>
<div id="bottom" class="abs"></div>
<svg width="736" height="982" viewBox="0 0 736 982" style="position:absolute;left:0;top:0;pointer-events:none" fill="none" stroke="#d2d2d2" stroke-width="1.3" stroke-linecap="round" stroke-linejoin="round">
<!-- status icons -->
<g stroke="#f4f4f4" stroke-width="1.6">
<path d="M641.5,7.2 Q645.6,3.6 649.8,7.2"/><path d="M643.3,9.6 Q645.6,7.6 647.9,9.6"/><circle cx="645.6" cy="12" r="0.7" fill="#f4f4f4"/>
</g>
<circle cx="660.2" cy="8.6" r="4.3" stroke="#f0f0f0" stroke-width="1.3"/><rect x="658.7" y="7.6" width="3" height="2.6" fill="#f0f0f0" stroke="none"/><path d="M659.2,7.6 v-0.8 a1,1 0 0 1 2,0 v0.8" stroke="#f0f0f0" stroke-width="0.7"/>
<path d="M676.5,4.8 A4.6,4.6 0 1 0 680.6,11.4 A3.9,3.9 0 0 1 676.5,4.8 Z" fill="#8a8a8a" stroke="none"/>
<rect x="708.3" y="4.6" width="21" height="9.4" rx="2.4" stroke="#9a9a9a" stroke-width="1"/><rect x="709.6" y="5.9" width="13.2" height="6.8" rx="1.2" fill="#3ecf4e" stroke="none"/><path d="M730.6,7.6 v3.4" stroke="#9a9a9a" stroke-width="1.4"/>
<path d="M721.2,3.6 L715.6,10 L719.2,10 L717.6,15 L723.6,8.4 L720,8.4 Z" fill="#fff" stroke="#3a3a3a" stroke-width="0.5"/>
<!-- CSP logo -->
<path d="M23,33.6 C20.4,31.6 20.2,29.6 22.6,29 C27,28.4 30.4,26.6 29.6,23.8 C28.8,21.2 23.6,20.8 20.6,22.2 C17.8,23.6 17.8,26.6 21,27 C23.6,27.2 25.6,26 25,24.6" stroke="#e6e6e6" stroke-width="2"/>
<!-- left top arrows -->
<g stroke="#6c6c6c" stroke-width="1.2"><path d="M5.5,45.5 l-3,3 l3,3 M10,45.5 l-3,3 l3,3"/><path d="M30,45.5 l3,3 l-3,3"/><path d="M44.5,45.5 l-3,3 l3,3 M49,45.5 l-3,3 l3,3"/></g>
<rect x="99" y="42.5" width="3.5" height="11" fill="#5c5c5c" stroke="none"/>
<!-- toolbar icons -->
<path d="M114,47.8 h12.6 M114,52.9 h12.6 M114,58 h12.6" stroke-width="1.5"/>
<path d="M146,49.2 h-6.6 v10.6 h13 v-5.6"/><path d="M143.2,56.6 l1,-3.2 l7.4,-7.6 l2.6,2.4 l-7.6,7.6 Z" fill="#d2d2d2" stroke-width="0.8"/>
<path d="M166,50.8 l4.7,-4.2 l4.7,4.2 M166,55.6 l4.7,4.4 l4.7,-4.4"/>
<rect x="185" y="45.4" width="15.4" height="15.2" rx="1.5"/><path d="M192.400,53.400 c1.600,-1.600 3.800,0 2.400,1.600 c-2.200,2.200 -6.400,0.400 -5.600,-2.800 c1,-3.400 7.400,-4 9.200,-1 c1.600,2.800 -1,6 -5,6.600 c-2,0.200 -3.600,-0.400 -4.600,-1.400" stroke-width="1.200"/>
<path d="M210.500,41 v25" stroke="#3a3a3a"/>
<path d="M221.600,46.200 h9.800 v8 M221.600,46.200 v11.800 l2.600,2.600 h2.400"/><circle cx="232.400" cy="58.600" r="3.600" fill="#d2d2d2" stroke="none"/><path d="M230.400,58.600 h4 M232.400,56.600 v4" stroke="#4a4a4a" stroke-width="1.100"/>
<path d="M248.800,59.400 v-12 h4.600 l1.400,1.800 h5.200 v2.400 M248.800,59.400 l3,-7.600 h11 l-2.800,7.600 Z" /><path d="M251.800,51.800 h11 l-2.800,7.600 h-11.200 Z" fill="#d2d2d2" stroke="none"/><path d="M258,46.400 h4.400 m-1.600,-1.600 l1.800,1.600 l-1.800,1.600" stroke-width="0.900"/>
<path d="M275,57.200 l3.400,-6.800 h8 l3.600,6.800 Z"/><path d="M275,57.200 h15 v2.400 h-15 Z" fill="#d2d2d2"/><path d="M282.400,45 v7.400 m-2.600,-2.400 l2.600,2.600 l2.600,-2.600"/>
<path d="M300,50.800 l4.700,-4.200 l4.700,4.200 M300,55.600 l4.700,4.400 l4.700,-4.400"/>
<path d="M317.500,41 v25" stroke="#3a3a3a"/>
<path d="M330.600,46 l-3.800,3.600 l3.800,3.400 M327.200,49.600 h9 a4.400,4.400 0 0 1 0,9 h-7.600" stroke-width="1.500"/>
<path d="M363.600,46 l3.800,3.600 l-3.800,3.400 M367,49.600 h-8 a4.400,4.400 0 0 0 -4.400,4.400 v4.600" stroke="#636363" stroke-width="1.500"/>
<path d="M378.500,41 v25" stroke="#3a3a3a"/>
<g stroke-width="1.400"><path d="M395.700,45.200 v3 M395.700,57.400 v3 M388.100,52.800 h3 M400.300,52.800 h3 M390.300,47.400 l2.200,2.200 M398.900,56 l2.200,2.200 M390.300,58.200 l2.200,-2.200 M398.900,49.600 l2.200,-2.200"/></g>
<g stroke="#626262"><rect x="415.600" y="46" width="9.600" height="9.600"/><rect x="419.400" y="49.800" width="9.600" height="9.600"/></g>
<path d="M443,54.200 l7.800,-7.400 l7.600,7.200 l-7.600,6.800 Z" fill="#d2d2d2" stroke-width="1"/><path d="M445.600,52.600 l5.200,-5 l5,4.800" stroke="#4a4a4a" stroke-width="1.200"/><path d="M443.200,54.400 q-1.400,2.400 -0.600,5" stroke-width="1.400"/>
<rect x="472" y="48.400" width="11.800" height="11.800" stroke-dasharray="1.600 1.300"/><path d="M477.900,48.400 v-3.600" /><g fill="#d2d2d2" stroke="none"><rect x="476.900" y="43.800" width="2" height="2"/><rect x="471" y="47.400" width="2" height="2"/><rect x="482.800" y="47.400" width="2" height="2"/><rect x="471" y="59.200" width="2" height="2"/><rect x="482.800" y="59.200" width="2" height="2"/></g>
<path d="M495.500,41 v25" stroke="#3a3a3a"/>
<g stroke="#626262"><rect x="505" y="46" width="13.600" height="13.600" stroke-dasharray="1.600 1.300"/><path d="M505,46 l13.600,13.600"/>
<rect x="532.800" y="46" width="12.800" height="13.600" stroke-dasharray="1.600 1.300"/><path d="M545.600,46 v13.600 h-12.800 Z" fill="#626262"/>
<rect x="560" y="46" width="13.400" height="13.600"/><rect x="562.600" y="48.600" width="8.200" height="8.400" fill="#585858"/></g>
<path d="M584.500,41 v25" stroke="#3a3a3a"/>
<path d="M594,47 v12.600 h12.400 M594,47 l9,9 M600.600,53.200 l8.600,-8.400" stroke-width="1.400"/>
<rect x="615.200" y="40.200" width="25.800" height="25.800" fill="#5b6789" stroke="none"/>
<path d="M621.400,54 h12 a6,5.600 0 0 1 -12,0 Z M628,54 l8.400,-9" stroke="#e4e4e4" stroke-width="1.400"/>
<path d="M650,59.800 h14.600 M652.600,59.800 v-5.400 h7.600 M656.600,54.400 l7.600,-8.600" stroke-width="1.400"/>
<path d="M674.500,41 v25" stroke="#3a3a3a"/>
<path d="M685.600,60.400 l0.800,-2.800 a6.600,6.400 0 1 1 2.600,2 Z"/><path d="M697.200,46 l2,-1.600 m-0.200,2 v-2 h-2" stroke-width="0.900"/>
<text x="691.500" y="57" font-family="Liberation Sans, sans-serif" font-size="9.500" font-weight="bold" fill="#d2d2d2" stroke="none" text-anchor="middle">?</text>
<path d="M718.800,73 l5.400,5.200 l5.400,-5.200" stroke="#e2e2e2" stroke-width="1.500"/>
</svg>
<svg width="110" height="500" viewBox="0 0 110 500" style="position:absolute;left:0;top:0;pointer-events:none" fill="none" stroke="#d0d0d0" stroke-width="1.3" stroke-linecap="round" stroke-linejoin="round">
<defs><linearGradient id="gsq" x1="0" y1="1" x2="1" y2="0"><stop offset="0" stop-color="#555"/><stop offset="1" stop-color="#d8d8d8"/></linearGradient>
<linearGradient id="gsq2" x1="0" y1="0" x2="1" y2="1"><stop offset="0" stop-color="#555"/><stop offset="1" stop-color="#c8c8c8"/></linearGradient></defs>
<!-- left strip icons -->
<g id="er"><path d="M19,68.400 l6.400,4.800 l-6.800,8.400 l-6.200,-4.800 Z" fill="#d0d0d0"/><path d="M12.400,76.800 l2.800,4 h4.600" /></g>
<g fill="#d0d0d0" stroke="#383838" stroke-width="0.800"><rect x="21" y="74.400" width="9" height="2.800"/><rect x="21" y="78" width="9" height="2.800"/><rect x="21" y="81.600" width="9" height="2.800"/></g>
<g transform="translate(0,37.400)"><path d="M19,68.400 l6.400,4.800 l-6.800,8.400 l-6.200,-4.800 Z" fill="#d0d0d0"/><path d="M12.400,76.800 l2.800,4 h4.600" /></g>
<circle cx="24.400" cy="117.200" r="3.400" fill="#383838" stroke="#d0d0d0" stroke-width="2.400" stroke-dasharray="1.700 1.100"/>
<g transform="translate(0,74)"><path d="M19,68.400 l6.400,4.800 l-6.800,8.400 l-6.200,-4.800 Z" fill="#d0d0d0"/><path d="M12.400,76.800 l2.800,4 h4.600" /></g>
<circle cx="24.600" cy="154.200" r="5" fill="#383838" stroke-width="1.200"/><circle cx="24.600" cy="154.200" r="2.200" stroke-width="1"/>
<circle cx="19.600" cy="186.300" r="7.600"/><rect x="15" y="181.700" width="9.200" height="9.200" rx="2" fill="url(#gsq2)" stroke-width="1"/>
<g fill="#cfcfcf" stroke="none"><rect x="12.700" y="209" width="14.200" height="14.500" rx="1"/></g>
<g fill="#383838" stroke="none"><rect x="14.200" y="210.600" width="2.600" height="2.600"/><rect x="22.600" y="210.600" width="2.600" height="2.600"/><rect x="18.400" y="214.800" width="2.600" height="2.600"/><rect x="14.200" y="219" width="2.600" height="2.600"/><rect x="22.600" y="219" width="2.600" height="2.600"/><rect x="18.400" y="210.600" width="2.600" height="2.600" fill="#777"/><rect x="14.200" y="214.800" width="2.600" height="2.600" fill="#777"/><rect x="22.600" y="214.800" width="2.600" height="2.600" fill="#777"/><rect x="18.400" y="219" width="2.600" height="2.600" fill="#777"/></g>
<rect x="12.700" y="239.300" width="14.200" height="14.200" rx="1" fill="#cfcfcf" stroke="none"/><g fill="#383838" stroke="none"><rect x="16.400" y="241" width="6.800" height="4.600" fill="#8a8a8a"/><rect x="16.400" y="247" width="6.800" height="4.600" fill="#8a8a8a"/><rect x="13.600" y="240.600" width="1.600" height="1.800"/><rect x="13.600" y="243.800" width="1.600" height="1.800"/><rect x="13.600" y="247" width="1.600" height="1.800"/><rect x="13.600" y="250.200" width="1.600" height="1.800"/><rect x="24.400" y="240.600" width="1.600" height="1.800"/><rect x="24.400" y="243.800" width="1.600" height="1.800"/><rect x="24.400" y="247" width="1.600" height="1.800"/><rect x="24.400" y="250.200" width="1.600" height="1.800"/></g>
<path d="M13.600,279.800 l6.400,-3.400 l6.400,3.400 l-6.400,3.400 Z M13.600,283.200 l6.400,3.400 l3,-1.600 M13.600,286.600 l6.400,3.400 l1.600,-0.800" stroke-width="1.200"/><g fill="#d0d0d0" stroke="none"><circle cx="26.400" cy="285.400" r="1.700"/><rect x="22.400" y="288.600" width="2.400" height="2.400"/><rect x="26" y="288.600" width="2.400" height="2.400"/><rect x="22.400" y="291.200" width="2.400" height="1.600"/><rect x="26" y="291.200" width="2.400" height="1.600"/></g>
<circle cx="19.600" cy="320.700" r="7.300" stroke-width="1.500"/><path d="M16.400,317.400 l9,9 M16.400,317.400 v5 M16.400,317.400 h5" stroke-width="1.700"/>
<path d="M11.800,365 v-13.600 h5 l1.200,1.600 h9 v12 Z" stroke-width="1.200"/><path d="M19.600,355.400 v5.400 m-2.400,-2.200 l2.400,2.400 l2.400,-2.400 M15.800,362.600 h7.600" stroke-width="1.400"/>
<path d="M11.800,401.600 v-13.600 h5 l1.200,1.600 h9 v12 Z" stroke-width="1.200"/><rect x="15" y="392.400" width="9" height="6.600" stroke-width="1"/><rect x="16.600" y="394" width="5.800" height="3.400" fill="#8a8a8a" stroke="none"/>
<path d="M13,428 l6.400,-3.800 l6.400,3.800 l-6.400,3.800 Z M13,431.800 l6.400,3.800 l6.400,-3.800 M13,435.600 l6.400,3.800 l6.400,-3.800" stroke-width="1.200"/>
<!-- tool panel header -->
<path d="M47.600,66 h4.800 M47.600,68.400 h4.800 M47.600,70.800 h4.800" stroke="#8c8c8c" stroke-width="0.900"/>
<path d="M67.400,76.800 l1,-3 l8.200,-8 l2,2 l-8.200,8 Z" fill="#d6d6d6" stroke-width="0.600"/>
<!-- tools -->
<circle cx="55.300" cy="95" r="5.800" stroke-width="1.200"/><path d="M59.600,99.400 l4.600,4.400" stroke-width="1.800"/>
<path d="M81.400,95.400 l2.600,5.800 q2.600,2.800 6,1 q1.800,-1.600 3.400,-7.600 l-1.400,-0.600 l-1.800,3.400 l0.600,-6.600 l-1.500,-0.200 l-1,5.400 l-0.300,-7 l-1.600,0 l-0.300,7 l-1.400,-5.400 l-1.500,0.400 l1.200,8.400 l-1.700,-2.800 Z" fill="#d0d0d0" stroke-width="0.500"/>
<path d="M49.200,123 l5.600,-3 l5.600,3 v6.400 l-5.600,3 l-5.600,-3 Z M49.200,123 l5.600,2.800 l5.600,-2.800 M54.800,125.800 v6.600" stroke-width="1"/><path d="M58,126.400 l6.800,3 l-2.800,1 l1.800,3.400 l-1.400,0.700 l-1.800,-3.400 l-2,2 Z" fill="#d0d0d0" stroke="#474747" stroke-width="0.600"/>
<path d="M83.600,131.400 c-4.400,-1.400 -3.400,-8 1.800,-10.400 c5,-2.200 9.600,0.400 8.600,4.800 c-0.800,3.800 -5,6.400 -8.400,5.400 c-2.400,-0.800 -0.800,-3.600 1,-2.400 c1.400,1 -0.600,4.600 -6.800,5" stroke-width="1.100"/>
<path d="M56.800,149.400 v15.200 M49.200,157 h15.200" stroke-width="1.300"/><path d="M56.800,148.600 l-2.400,3 h4.800 Z M56.800,165.400 l-2.400,-3 h4.800 Z M48.400,157 l3,-2.400 v4.800 Z M65.200,157 l-3,-2.400 v4.800 Z" fill="#d0d0d0" stroke-width="0.600"/>
<path d="M79.400,164.600 l8,-8.200" stroke-width="1.500"/><path d="M89.600,149.400 v9.800 M84.800,154.300 h9.600 M86.200,150.900 l6.800,6.800 M86.200,157.700 l6.800,-6.800" stroke-width="1.100"/>
<path d="M49.600,194.800 l1.200,-4.200 l6.800,-6.800 l3,3 l-6.800,6.800 Z" stroke-width="1.100"/><path d="M57,183 l4.600,4.600 M59.600,184.600 l2.600,-3.400 q1.600,-1.200 2.600,0.200 q1,1.200 -0.200,2.400 l-3.200,2.800 Z" fill="#d0d0d0" stroke-width="1"/>
<path d="M43.500,204.700 h59" stroke="#5c5c5c" stroke-width="1"/>
<rect x="47.800" y="212" width="18.200" height="18" fill="#47cfd8" stroke="none"/>
<path d="M51.200,227.400 q-0.600,-6.600 6.800,-11.200 l3.600,3.800 q-3.400,6.800 -10.400,7.400 Z" fill="#2b4a6a" stroke="#2b4a6a" stroke-width="0.600"/><path d="M51.400,227.200 l5.600,-6" stroke="#47cfd8" stroke-width="0.800"/><path d="M59.400,215 l2,-1.600 l2.800,2.800 l-1.600,2 Z" fill="#2b4a6a" stroke="#2b4a6a" stroke-width="0.600"/>
<path d="M80,222.400 l6.600,-5.400 l4.600,5.800 l-6.600,5.400 Z" fill="#d0d0d0" stroke-width="0.800"/><path d="M87.400,216.400 l3,-2.400 l3.400,4.200 l-3,2.400 Z" fill="#d0d0d0" stroke-width="0.800"/><path d="M82.600,222.600 l3.800,-3" stroke="#474747" stroke-width="1"/>
<path d="M53.400,244.400 q-4.400,6 -4.200,9.600 q0.400,4 4.400,4 q2.600,0 3.200,-2 q0.600,2 3.200,2 q4,0 4.400,-4 q0.200,-3.600 -4.200,-9.600 q-2.200,3 -3.400,5.600 q-1.200,-2.600 -3.400,-5.600 Z" fill="#a8a8a8" stroke-width="0.600" stroke="#c8c8c8"/>
<rect x="73.300" y="237.900" width="27.600" height="27.200" fill="#5d698d" stroke="#3a3f52" stroke-width="1"/>
<path d="M79.600,250.600 l7.800,-6.400 l7,6 l-7.800,6.400 Z" fill="#dcdcdc" stroke="none"/><path d="M79.400,251.600 l-0.200,2.800 l4,3.800 h9" stroke="#dcdcdc" stroke-width="1.100"/>
<path d="M50.400,285.400 l9.400,-10 q2.600,-2 4.400,0 q1.800,2.200 -0.200,4.400 l-9.800,9.400 Z" stroke-width="1.300"/><ellipse cx="52.400" cy="287.200" rx="2.600" ry="1.600" transform="rotate(45 52.400 287.200)" stroke-width="1"/>
<path d="M80.400,274.800 l13.400,13 M93.800,274.800 l-13.400,13" stroke-width="1.300"/><path d="M87.100,275.600 l3,3 l-3,3 l-3,-3 Z M87.100,281.600 l3,3 l-3,3 l-3,-3 Z M81,281.300 l3,-2.800 l3,2.800 l-3,2.800 Z M87.200,281.300 l3,-2.800 l3,2.800 l-3,2.800 Z" fill="#d0d0d0" stroke="none"/>
<rect x="53.600" y="311.600" width="11.600" height="7" rx="1.200" fill="#d0d0d0" stroke="none"/><path d="M55.400,315.400 h8" stroke="#474747" stroke-width="1.100"/><rect x="57" y="307.600" width="4.800" height="3.600" fill="#d0d0d0" stroke="none"/><rect x="58.200" y="303.600" width="2.400" height="3.600" fill="#d0d0d0" stroke="none"/>
<g fill="#d0d0d0" stroke="none"><circle cx="50" cy="303" r="0.700"/><circle cx="50" cy="306" r="0.700"/><circle cx="50" cy="309" r="0.700"/><circle cx="52.600" cy="304.400" r="0.700"/><circle cx="52.600" cy="307.400" r="0.700"/><circle cx="55.200" cy="305.800" r="0.700"/></g>
<path d="M43.500,328.600 h59" stroke="#5c5c5c" stroke-width="1"/>
<path d="M51,346.600 l7.400,-7 l7.200,6.800 l-7.200,6.600 Z" fill="#d0d0d0" stroke-width="0.800"/><path d="M53.600,345 l4.800,-4.600 l4.800,4.400" stroke="#474747" stroke-width="1.100"/><path d="M51,346.800 q-2,2.400 -1,5.400" stroke-width="1.600"/>
<rect x="80" y="339" width="14.400" height="13.800" rx="2" fill="url(#gsq)" stroke="#d0d0d0" stroke-width="0.900"/>
<ellipse cx="58" cy="374" rx="7" ry="5.400" transform="rotate(-20 58 374)" fill="#8a8a8a" stroke-width="1.100"/><path d="M54.400,379 c-2.400,-1 -1,-3.600 0.800,-2.600 c1.800,1.200 -0.800,5 -5.600,5.800" stroke-width="1.100"/>
<path d="M80.600,369.800 l13.200,-1 l-13,14 Z" stroke-width="1.700"/>
<path d="M50.600,400.400 h12.800 v11 h-12.800 Z" stroke-width="1.100"/><path d="M49,407.800 l16,-4" stroke="#474747" stroke-width="3"/><path d="M49,406.600 l16,-4 M49,409 l16,-4" stroke-width="1"/>
<path d="M51.600,428.600 v13.400 M50,430.200 h14.400" stroke-width="1.200"/><rect x="50" y="428.600" width="3.200" height="3.200" fill="#d0d0d0" stroke="none"/><path d="M56.400,432.800 l8.200,3.800 l-3.400,1.200 l-1.400,3.600 Z" fill="#d0d0d0" stroke-width="0.600"/>
<path d="M87.200,433.800 q-4.800,0.600 -7,7.600 M87.200,433.800 q4.800,0.600 7,7.600" stroke-width="2"/><path d="M86,433 l-5.400,-4 l-1,4.600 l4.400,1.600 Z M88.400,433 l5.400,-4 l1,4.600 l-4.400,1.600 Z" fill="#d0d0d0" stroke-width="0.600"/><circle cx="87.200" cy="433" r="1.600" fill="#d0d0d0" stroke="none"/>
<!-- swatches -->
<rect x="41" y="454.600" width="17" height="23.600" rx="2.600" fill="#a5a168" stroke="#8fa3d0" stroke-width="1.600"/>
<rect x="63.400" y="454.400" width="18.200" height="24" rx="2.600" fill="#3b3423" stroke="#5a5a5a" stroke-width="1.200"/>
<rect x="86.200" y="454.400" width="17.600" height="24" rx="2.600" fill="#fff" stroke="#5a5a5a" stroke-width="1.200"/>
<g fill="#4a4a4a" stroke="none"><rect x="87.600" y="456" width="3.700" height="4.200"/><rect x="95" y="456" width="3.700" height="4.200"/><rect x="91.300" y="460.200" width="3.700" height="4.200"/><rect x="98.700" y="460.200" width="3.700" height="4.200"/><rect x="87.600" y="464.400" width="3.700" height="4.200"/><rect x="95" y="464.400" width="3.700" height="4.200"/><rect x="91.300" y="468.600" width="3.700" height="4.200"/><rect x="98.700" y="468.600" width="3.700" height="4.200"/><rect x="87.600" y="472.800" width="3.700" height="4"/><rect x="95" y="472.800" width="3.700" height="4"/></g>
<text x="87.200" y="413.600" font-family="Liberation Sans, sans-serif" font-size="20" fill="#d0d0d0" stroke="none" text-anchor="middle">A</text>
</svg>

</body></html>
